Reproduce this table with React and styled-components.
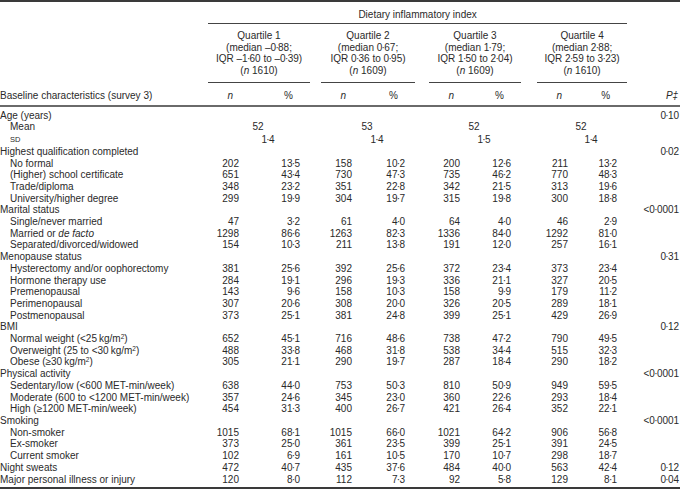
import React from 'react';
import styled, { createGlobalStyle } from 'styled-components';

const GlobalStyle = createGlobalStyle`
  body {
    margin: 0;
    background: #fff;
  }
`;

// label | Q1 n % | gap | Q2 n % | gap | Q3 n % | gap | Q4 n % | P
const widths = [208, 44, 58, 11, 44, 50, 14, 44, 48, 16, 44, 46, 53];

const quartiles = [
  { name: 'Quartile 1', median: '–0·88', iqr: '–1·60 to –0·39', n: '1610', mean: '52', sd: '1·4' },
  { name: 'Quartile 2', median: '0·67', iqr: '0·36 to 0·95', n: '1609', mean: '53', sd: '1·4' },
  { name: 'Quartile 3', median: '1·79', iqr: '1·50 to 2·04', n: '1609', mean: '52', sd: '1·5' },
  { name: 'Quartile 4', median: '2·88', iqr: '2·59 to 3·23', n: '1610', mean: '52', sd: '1·4' },
];

const sections = [
  { title: 'Age (years)', p: '0·10', stats: true },
  {
    title: 'Highest qualification completed',
    p: '0·02',
    items: [
      ['No formal', '202', '13·5', '158', '10·2', '200', '12·6', '211', '13·2'],
      ['(Higher) school certificate', '651', '43·4', '730', '47·3', '735', '46·2', '770', '48·3'],
      ['Trade/diploma', '348', '23·2', '351', '22·8', '342', '21·5', '313', '19·6'],
      ['University/higher degree', '299', '19·9', '304', '19·7', '315', '19·8', '300', '18·8'],
    ],
  },
  {
    title: 'Marital status',
    p: '<0·0001',
    items: [
      ['Single/never married', '47', '3·2', '61', '4·0', '64', '4·0', '46', '2·9'],
      [
        <>
          Married or <i>de facto</i>
        </>,
        '1298', '86·6', '1263', '82·3', '1336', '84·0', '1292', '81·0',
      ],
      ['Separated/divorced/widowed', '154', '10·3', '211', '13·8', '191', '12·0', '257', '16·1'],
    ],
  },
  {
    title: 'Menopause status',
    p: '0·31',
    items: [
      ['Hysterectomy and/or oophorectomy', '381', '25·6', '392', '25·6', '372', '23·4', '373', '23·4'],
      ['Hormone therapy use', '284', '19·1', '296', '19·3', '336', '21·1', '327', '20·5'],
      ['Premenopausal', '143', '9·6', '158', '10·3', '158', '9·9', '179', '11·2'],
      ['Perimenopausal', '307', '20·6', '308', '20·0', '326', '20·5', '289', '18·1'],
      ['Postmenopausal', '373', '25·1', '381', '24·8', '399', '25·1', '429', '26·9'],
    ],
  },
  {
    title: 'BMI',
    p: '0·12',
    items: [
      ['Normal weight (<25\u2009kg/m', '652', '45·1', '716', '48·6', '738', '47·2', '790', '49·5'],
      ['Overweight (25 to <30\u2009kg/m', '488', '33·8', '468', '31·8', '538', '34·4', '515', '32·3'],
      ['Obese (≥30\u2009kg/m', '305', '21·1', '290', '19·7', '287', '18·4', '290', '18·2'],
    ].map(([label, ...rest]) => [
      <>
        {label}
        <sup>2</sup>)
      </>,
      ...rest,
    ]),
  },
  {
    title: 'Physical activity',
    p: '<0·0001',
    items: [
      ['Sedentary/low (<600 MET-min/week)', '638', '44·0', '753', '50·3', '810', '50·9', '949', '59·5'],
      ['Moderate (600 to <1200 MET-min/week)', '357', '24·6', '345', '23·0', '360', '22·6', '293', '18·4'],
      ['High (≥1200 MET-min/week)', '454', '31·3', '400', '26·7', '421', '26·4', '352', '22·1'],
    ],
  },
  {
    title: 'Smoking',
    p: '<0·0001',
    items: [
      ['Non-smoker', '1015', '68·1', '1015', '66·0', '1021', '64·2', '906', '56·8'],
      ['Ex-smoker', '373', '25·0', '361', '23·5', '399', '25·1', '391', '24·5'],
      ['Current smoker', '102', '6·9', '161', '10·5', '170', '10·7', '298', '18·7'],
    ],
  },
];

const singles = [
  ['Night sweats', '472', '40·7', '435', '37·6', '484', '40·0', '563', '42·4', '0·12'],
  ['Major personal illness or injury', '120', '8·0', '112', '7·3', '92', '5·8', '129', '8·1', '0·04'],
];

const Table = styled.table`
  width: 680px;
  table-layout: fixed;
  border-collapse: separate;
  border-spacing: 0;
  border-top: 2px solid #3a3a3a;
  border-bottom: 2px solid #3a3a3a;
  font-family: 'Liberation Sans', Arial, sans-serif;
  font-size: 10px;
  line-height: 11.7px;
  color: #2a2a2a;

  td,
  th {
    padding: 0;
    font-weight: normal;
    white-space: nowrap;
  }

  sup {
    font-size: 6.5px;
    line-height: 0;
    vertical-align: 3.5px;
  }
`;

// decimal point of the journal style: a raised dot set tight to its digits
const Dot = styled.span`
  margin: 0 -0.7px;
`;

const IndexHead = styled.th`
  text-align: center;
  padding: 7px 0 2.3px !important;
  border-bottom: 1px solid #444;
`;

const QuartileHead = styled.th`
  text-align: center;
  padding: 6px 0 5px !important;
  border-bottom: 1px solid #444;
`;

const ColumnRow = styled.tr`
  th {
    padding-top: 7.5px;
    padding-bottom: 3px;
    border-bottom: 2px solid #6a6a6a;
  }
`;

const LabelHead = styled.th`
  text-align: left;
`;

const ColHead = styled.th`
  text-align: right;
  font-style: ${(p) => (p.$italic ? 'italic' : 'normal')};
  padding-right: ${(p) => p.$pad}px !important;
`;

const PHead = styled.th`
  text-align: right;
  font-style: italic;
  padding-right: 2px !important;
`;

const Body = styled.tbody`
  tr:first-child td {
    padding-top: 2.7px;
  }
  tr:last-child td {
    padding-bottom: 1.5px;
  }
`;

const Label = styled.td`
  text-align: left;
  padding-left: ${(p) => (p.$indent ? 10 : 0)}px !important;
`;

const SmallCaps = styled.span`
  font-size: 7.5px;
`;

const Num = styled.td`
  text-align: right;
  padding-right: ${(p) => p.$pad}px !important;
`;

const Spread = styled.td`
  text-align: center;
  padding-left: ${(p) => (p.$right ? 18 : 0)}px !important;
  padding-right: ${(p) => (p.$right ? 0 : 2)}px !important;
`;

const PCell = styled.td`
  text-align: right;
  padding-right: 1px !important;
`;

function fmt(value) {
  const parts = String(value).split('·');
  if (parts.length === 1) return value;
  return (
    <>
      {parts[0]}
      <Dot>·</Dot>
      {parts[1]}
    </>
  );
}

function fmtAll(text) {
  return text.split(/(·)/).map((part, i) =>
    // eslint-disable-next-line react/no-array-index-key
    part === '·' ? <Dot key={i}>·</Dot> : part
  );
}

function DataCells({ values }) {
  const cells = [];
  for (let q = 0; q < 4; q += 1) {
    cells.push(
      <Num key={`n${q}`} $pad={13}>
        {values[q * 2]}
      </Num>,
      <Num key={`p${q}`} $pad={10}>
        {fmt(values[q * 2 + 1])}
      </Num>
    );
    if (q < 3) cells.push(<td key={`g${q}`} />);
  }
  return cells;
}

function StatRow({ label, field, right }) {
  const cells = [];
  quartiles.forEach((q, i) => {
    cells.push(
      <Spread key={`s${i}`} colSpan={2} $right={right}>
        {fmt(q[field])}
      </Spread>
    );
    if (i < 3) cells.push(<td key={`g${i}`} />);
  });
  return (
    <tr>
      <Label $indent>{label}</Label>
      {cells}
      <td />
    </tr>
  );
}

export default function App() {
  const headCells = [];
  quartiles.forEach((q, i) => {
    headCells.push(
      <QuartileHead key={q.name} colSpan={2}>
        {q.name}
        <br />
        (median {fmtAll(q.median)};
        <br />
        IQR {fmtAll(q.iqr)})
        <br />
        (<i>n</i> {q.n})
      </QuartileHead>
    );
    if (i < 3) headCells.push(<th key={`g${i}`} />);
  });

  const colHeads = [];
  for (let q = 0; q < 4; q += 1) {
    colHeads.push(
      <ColHead key={`n${q}`} $italic $pad={19}>
        n
      </ColHead>,
      <ColHead key={`p${q}`} $pad={17}>
        %
      </ColHead>
    );
    if (q < 3) colHeads.push(<th key={`g${q}`} />);
  }

  return (
    <>
      <GlobalStyle />
      <Table>
        <colgroup>
          {widths.map((w, i) => (
            // eslint-disable-next-line react/no-array-index-key
            <col key={i} style={{ width: w }} />
          ))}
        </colgroup>
        <thead>
          <tr>
            <th />
            <IndexHead colSpan={11}>Dietary inflammatory index</IndexHead>
            <th />
          </tr>
          <tr>
            <th />
            {headCells}
            <th />
          </tr>
          <ColumnRow>
            <LabelHead>Baseline characteristics (survey 3)</LabelHead>
            {colHeads}
            <PHead>P‡</PHead>
          </ColumnRow>
        </thead>
        <Body>
          {sections.map((section) => (
            <React.Fragment key={section.title}>
              <tr>
                <Label>{section.title}</Label>
                <td colSpan={11} />
                <PCell>{fmt(section.p)}</PCell>
              </tr>
              {section.stats && (
                <>
                  <StatRow label="Mean" field="mean" />
                  <StatRow label={<SmallCaps>SD</SmallCaps>} field="sd" right />
                </>
              )}
              {section.items &&
                section.items.map(([label, ...values], i) => (
                  // eslint-disable-next-line react/no-array-index-key
                  <tr key={i}>
                    <Label $indent>{label}</Label>
                    <DataCells values={values} />
                    <td />
                  </tr>
                ))}
            </React.Fragment>
          ))}
          {singles.map(([label, ...values]) => (
            <tr key={label}>
              <Label>{label}</Label>
              <DataCells values={values.slice(0, 8)} />
              <PCell>{fmt(values[8])}</PCell>
            </tr>
          ))}
        </Body>
      </Table>
    </>
  );
}
